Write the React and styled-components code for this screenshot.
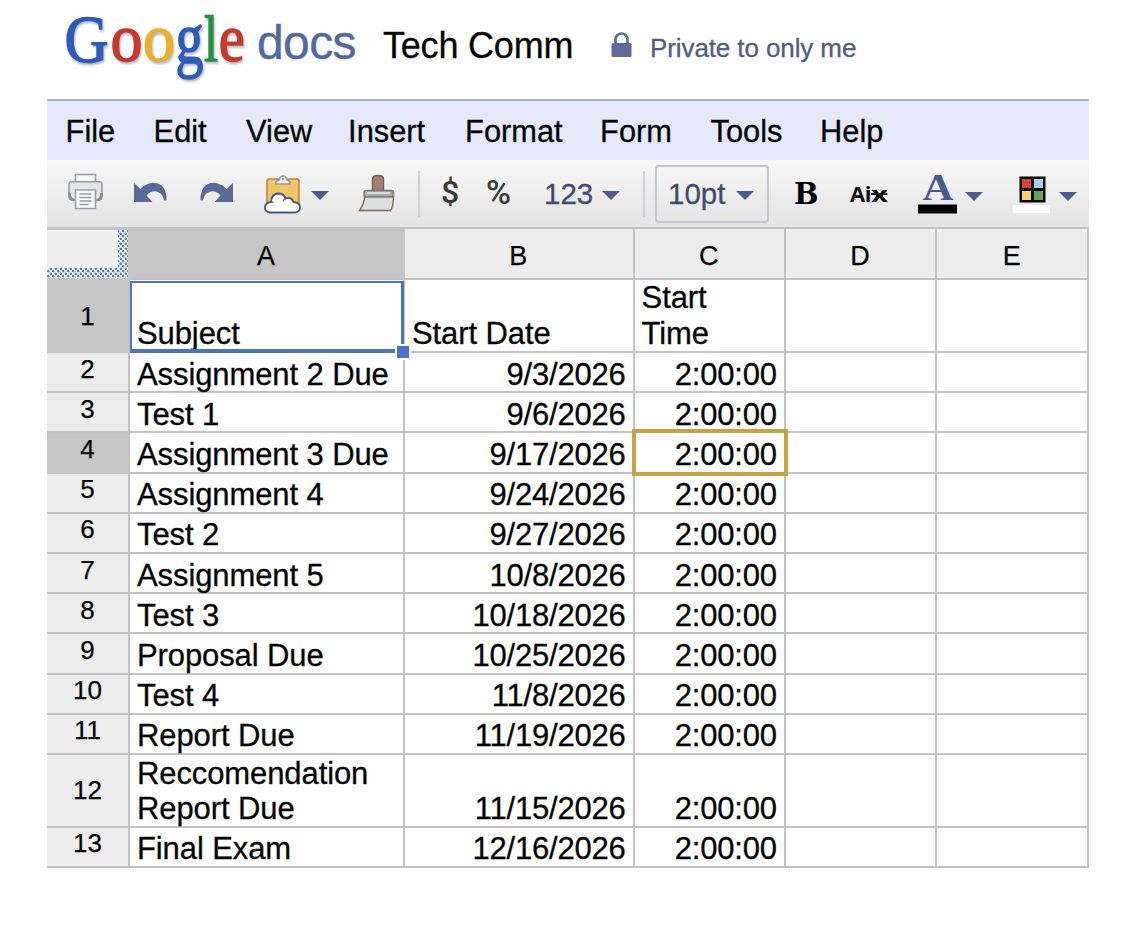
import { Fragment } from 'react';
import styled, { createGlobalStyle, css } from 'styled-components';

const GlobalStyle = createGlobalStyle`
  *, *::before, *::after {
    box-sizing: border-box;
  }
  body {
    margin: 0;
    background-color: #fefefe;
    font-family: "Liberation Sans", Arial, sans-serif;
    color: #050505;
  }
`

const Page = styled.div`
  width: 1134px;
  height: 928px;
  padding: 0 45px 0 47px;
  overflow: hidden;
`

const Header = styled.header`
  height: 99px;
  display: flex;
  align-items: flex-start;
`

const Logo = styled.svg`
  width: 210px;
  height: 96px;
  flex: none;
  overflow: visible;
`

const Product = styled.div`
  width: 126px;
  padding-top: 16px;
  font-size: 48px;
  line-height: 53px;
  letter-spacing: -0.6px;
  color: #5468a0;
  -webkit-text-stroke: 0.4px #5468a0;
`

const DocTitle = styled.h1`
  width: 228px;
  margin: 0;
  padding-top: 25px;
  font-size: 36px;
  line-height: 42px;
  font-weight: normal;
  letter-spacing: -0.2px;
  -webkit-text-stroke: 0.3px #050505;
`

const Lock = styled.svg`
  width: 22px;
  height: 27px;
  margin-top: 32px;
`

const Privacy = styled.div`
  margin-left: 17px;
  padding-top: 33px;
  font-size: 26px;
  line-height: 30px;
  letter-spacing: -0.1px;
  color: #505d80;
  -webkit-text-stroke: 0.3px #505d80;
`

const MenuBar = styled.nav`
  height: 61px;
  padding: 2px 0 0 18.6px;
  border-top: 2px solid #a6b0d6;
  background-color: #e6e8fb;
  display: flex;
  align-items: center;
`

const MenuItem = styled.div`
  width: ${({ $width }) => $width}px;
  font-size: 30.8px;
  line-height: 36px;
  white-space: nowrap;
  -webkit-text-stroke: 0.3px #050505;
`

const Toolbar = styled.div`
  height: 69px;
  padding-left: 20px;
  border-bottom: 2px solid #c2c2c2;
  background: linear-gradient(#f7f7f7, #e4e4e4);
  display: flex;
  align-items: center;
`

const Tool = styled.div`
  width: ${({ $width }) => $width}px;
  height: 67px;
  padding-bottom: ${({ $lift }) => $lift || 0}px;
  flex: none;
  display: flex;
  align-items: center;

  svg {
    display: block;
    flex: none;
    overflow: visible;
  }
`

const Separator = styled.div`
  width: 2px;
  height: 46px;
  margin-right: ${({ $gap }) => $gap}px;
  flex: none;
  background-color: #d0d1d4;
`

const ToolText = styled.span`
  font-size: 29.5px;
  line-height: 34px;
  color: #414b6b;
  -webkit-text-stroke: 0.3px #414b6b;
`

const FormatSign = styled.span`
  font-family: Roboto, sans-serif;
  font-size: ${({ $size }) => $size}px;
  font-weight: 500;
  line-height: 36px;
  color: #3a3a3a;
`

const Caret = styled.span`
  width: 0;
  height: 0;
  margin-left: ${({ $gap }) => $gap}px;
  margin-top: ${({ $drop }) => $drop || 0}px;
  border-left: 9px solid transparent;
  border-right: 9px solid transparent;
  border-top: 9px solid #4a5b8e;
`

const SizeBox = styled.div`
  width: 114px;
  height: 58px;
  margin-right: 25px;
  padding-left: 11px;
  flex: none;
  display: flex;
  align-items: center;
  border: 2px solid #c3c4ce;
  border-radius: 4px;
`

const Bold = styled.span`
  padding-top: 1px;
  font-family: "DejaVu Serif", serif;
  font-weight: bold;
  font-size: 29px;
  line-height: 34px;
  color: #000;
`

const Clear = styled.span`
  font-family: "Open Sans", sans-serif;
  font-weight: 700;
  font-size: 22px;
  line-height: 30px;
  letter-spacing: -0.5px;
  color: #111;

  s {
    display: inline-block;
    transform: scaleX(1.35);
    transform-origin: left;
    text-decoration-thickness: 2px;
  }
`

const Grid = styled.div`
  width: 1042px;
  display: grid;
  grid-template-columns: 83px 275px 229.6px 151.2px 151.6px 151.6px;
  grid-template-rows: 51px 73px repeat(10, 40.2px) 73px 40px;
`

const line = '2px solid #c3c3c3'

const ColumnHead = styled.div`
  border-right: 2px solid ${({ $active }) => ($active ? '#c6c6c6' : '#c3c3c3')};
  border-bottom: ${line};
  background-color: ${({ $active }) => ($active ? '#c6c6c6' : '#ededed')};
  display: flex;
  justify-content: center;
  align-items: center;
  padding: 6px 1px 0 0;
  font-size: 27px;
  -webkit-text-stroke: 0.25px #050505;
`

const Corner = styled.div`
  background-color: #c6c6c6;
  padding: 1px 2px 2px 0;
`

const CornerDots = styled.div`
  width: 81px;
  height: 48px;
  padding: 0 10px 10px 0;
  background-color: #eef3fd;
  background-image: radial-gradient(circle at 1.25px 1.25px, #4a74cf 0.9px, transparent 1.5px),
    radial-gradient(circle at 3.75px 3.75px, #4a74cf 0.9px, transparent 1.5px);
  background-size: 5px 5px;
`

const CornerFace = styled.div`
  width: 71px;
  height: 38px;
  background-color: #efefef;
`

const RowHead = styled.div`
  border-right: ${line};
  border-bottom: 2px solid ${({ $active }) => ($active ? '#c6c6c6' : '#c3c3c3')};
  background-color: ${({ $active }) => ($active ? '#c6c6c6' : '#ededed')};
  display: flex;
  justify-content: center;
  align-items: center;
  padding-bottom: ${({ $tall }) => ($tall ? 0 : 7)}px;
  font-size: 26px;
  line-height: 30px;
  -webkit-text-stroke: 0.25px #050505;
`

const selected = css`
  &::before {
    content: "";
    position: absolute;
    inset: 1px -1px -2px 0;
    border: solid #4f74bf;
    border-width: 2px 3px 4px 2px;
  }
  &::after {
    content: "";
    position: absolute;
    right: -8px;
    bottom: -9px;
    width: 16px;
    height: 16px;
    border: 2px solid #fefefe;
    background-color: #4a72cc;
  }
`

const collaborator = css`
  &::before {
    content: "";
    position: absolute;
    inset: -4px -4px -4px -3px;
    border: 4px solid #c8a247;
  }
`

const Cell = styled.div`
  position: relative;
  z-index: ${({ $mark }) => ($mark ? 1 : 0)};
  min-width: 0;
  padding: 0 7px;
  border-right: ${line};
  border-bottom: ${line};
  display: flex;
  align-items: flex-end;
  justify-content: ${({ $right }) => ($right ? 'flex-end' : 'flex-start')};
  font-size: 31px;
  line-height: 35.5px;
  letter-spacing: ${({ $right }) => ($right ? -0.2 : -0.1)}px;
  white-space: pre;
  -webkit-text-stroke: 0.3px #050505;
  ${({ $mark }) => $mark === 'selected' && selected}
  ${({ $mark }) => $mark === 'collaborator' && collaborator}
`

const CellText = styled.span`
  margin-bottom: ${({ $head }) => ($head ? 0 : -1)}px;
`

const menus = [
  ['File', 88],
  ['Edit', 92.5],
  ['View', 102],
  ['Insert', 117],
  ['Format', 135],
  ['Form', 110.5],
  ['Tools', 109.5],
  ['Help', 80],
]

const letters = [
  ['G', 17.5, 62, 68, 44, '#2f5bb7'],
  ['o', 63.5, 60.5, 68, 32, '#c53a2b'],
  ['o', 96, 60.5, 68, 32, '#e9b02f'],
  ['g', 128.5, 62.5, 73, 28, '#2f5bb7'],
  ['l', 157, 60.5, 66, 14, '#2c8f3c'],
  ['e', 171.8, 60.5, 68, 26, '#c53a2b'],
]

const rows = [
  ['Subject', 'Start Date', 'Start\nTime'],
  ['Assignment 2 Due', '9/3/2026', '2:00:00'],
  ['Test 1', '9/6/2026', '2:00:00'],
  ['Assignment 3 Due', '9/17/2026', '2:00:00'],
  ['Assignment 4', '9/24/2026', '2:00:00'],
  ['Test 2', '9/27/2026', '2:00:00'],
  ['Assignment 5', '10/8/2026', '2:00:00'],
  ['Test 3', '10/18/2026', '2:00:00'],
  ['Proposal Due', '10/25/2026', '2:00:00'],
  ['Test 4', '11/8/2026', '2:00:00'],
  ['Report Due', '11/19/2026', '2:00:00'],
  ['Reccomendation\nReport Due', '11/15/2026', '2:00:00'],
  ['Final Exam', '12/16/2026', '2:00:00'],
]

const GoogleLogo = () => (
  <Logo viewBox="0 0 210 96">
    <defs>
      <filter id="bevel" x="-10%" y="-10%" width="125%" height="130%">
        <feDropShadow dx="1" dy="2" stdDeviation="1.2" floodColor="#5d6f9c" floodOpacity="0.5" />
      </filter>
    </defs>
    <g fontFamily="Liberation Serif, serif" strokeWidth="1.5" filter="url(#bevel)">
      {letters.map(([letter, x, y, size, width, color], i) => (
        <text key={i} x={x} y={y} fontSize={size} textLength={width} lengthAdjust="spacingAndGlyphs" fill={color} stroke={color}>
          {letter}
        </text>
      ))}
    </g>
  </Logo>
)

const PrintIcon = () => (
  <svg width="37" height="37" viewBox="0 0 37 37" fill="none" stroke="#9a9da3" strokeWidth="1.6">
    <path d="M8.5 9V1.5h20V9" fill="#f8f8f8" />
    <path d="M4 8.8h29q2 0 2 3v11q0 4.500-4 4.500H6q-4 0-4-4.500v-11q0-3 2-3Z" fill="#e3e5e9" />
    <path d="M2.500 20q0 7 5 7M34.500 20q0 7-5 7" stroke="#858991" strokeWidth="2.500" />
    <path d="M8.500 17h20v18.500h-20Z" fill="#fbfbfb" />
    <path d="M12.500 21h12M12.500 24.500h12M12.500 28h12M12.500 31.500h9" strokeWidth="1.300" />
  </svg>
)

const UndoIcon = ({ flip }) => (
  <svg width="34" height="21" viewBox="0 0 34 21">
    <path
      transform={flip ? 'translate(34 0) scale(-1 1)' : undefined}
      d="M1 1v19h18.500l-6-6.500Q18 8.500 23.500 9.500 30 11 31 18.500h2.500Q34 8 28 3 20-2 11.500 3.600L7.300 7Z"
      fill="#586a98"
    />
  </svg>
)

const PasteIcon = () => (
  <svg width="40" height="40" viewBox="0 0 40 40">
    <rect x="4" y="5" width="32" height="31" rx="2" fill="#f1c468" stroke="#b98338" strokeWidth="1.500" />
    <path d="M12.500 10q0-3.500 4-4 0-4 3.500-4t3.500 4q4 .5 4 4Z" fill="#f4f4f4" stroke="#999" strokeWidth="1.300" />
    <circle cx="20" cy="5" r="1.400" fill="#999" />
    <path
      d="M7 38.500q-5-.5-5-5t6-5.500Q8.500 20 15 19.500q6 0 7.500 5 6-2 8 3.500 6 .5 6.500 5 0 5-5 5.500Z"
      fill="#fff"
      stroke="#45598c"
      strokeWidth="1.800"
    />
    <path d="M8 28q1.500-.3 2.500.5M22.500 24.500q-2 1-2.500 3" fill="none" stroke="#45598c" strokeWidth="1.300" />
  </svg>
)

const BrushIcon = () => (
  <svg width="38" height="38" viewBox="0 0 38 38" strokeWidth="1.400">
    <path d="M14.500 17V5q0-3.500 5.500-3.500T25.500 5v12Z" fill="#a08172" stroke="#765b4e" />
    <path d="M7 22q-1 8-5.500 14.500h31q3-4 3-14.500Z" fill="#dedede" stroke="#7f6558" />
    <rect x="6" y="16.500" width="29.500" height="6.500" rx="2" fill="#a9adad" stroke="#777" />
    <path d="M9 19h23" stroke="#dadddd" strokeWidth="2" />
  </svg>
)

const TextColorIcon = () => (
  <svg width="39" height="44" viewBox="0 0 39 44">
    <text x="4.500" y="27.500" fontFamily="Liberation Serif, serif" fontWeight="bold" fontSize="37" textLength="31" lengthAdjust="spacingAndGlyphs" fill="#475a8c">
      A
    </text>
    <rect x="0" y="32.500" width="39" height="9" fill="#000" />
  </svg>
)

const FillColorIcon = () => (
  <svg width="37" height="44" viewBox="0 0 37 44">
    <rect x="6.500" y="4.500" width="26" height="26" fill="#080808" />
    <rect x="9" y="7" width="9" height="9" fill="#d8433a" />
    <rect x="21" y="7" width="9" height="9" fill="#a9cde9" />
    <rect x="9" y="19" width="9" height="9" fill="#f8d267" />
    <rect x="21" y="19" width="9" height="9" fill="#63a552" />
    <rect x="0" y="33" width="37" height="8" fill="#fff" />
  </svg>
)

const getMark = (row, column) => {
  if (row === 0 && column === 0) return 'selected'
  if (row === 3 && column === 2) return 'collaborator'
  return undefined
}

export default function App() {
  return (
    <>
      <GlobalStyle />
      <Page>
        <Header>
          <GoogleLogo />
          <Product>docs</Product>
          <DocTitle>Tech Comm</DocTitle>
          <Lock viewBox="0 0 22 27">
            <path d="M4.500 12V7.500a6 6 0 0 1 12 0V12" fill="none" stroke="#606b91" strokeWidth="2.600" />
            <rect x="0.500" y="11" width="20" height="14" rx="1.500" fill="#606b97" />
          </Lock>
          <Privacy>Private to only me</Privacy>
        </Header>
        <MenuBar>
          {menus.map(([name, width]) => (
            <MenuItem key={name} $width={width}>{name}</MenuItem>
          ))}
        </MenuBar>
        <Toolbar>
          <Tool $width={66} $lift={4}><PrintIcon /></Tool>
          <Tool $width={67} $lift={2}><UndoIcon /></Tool>
          <Tool $width={63} $lift={2}><UndoIcon flip /></Tool>
          <Tool $width={95}>
            <PasteIcon />
            <Caret $gap={8} $drop={3} />
          </Tool>
          <Tool $width={60} $lift={1}><BrushIcon /></Tool>
          <Separator $gap={21} />
          <Tool $width={45} $lift={3}><FormatSign $size={32}>$</FormatSign></Tool>
          <Tool $width={58} $lift={3}><FormatSign $size={34}>%</FormatSign></Tool>
          <Tool $width={99}>
            <ToolText>123</ToolText>
            <Caret $gap={9} $drop={3} />
          </Tool>
          <Separator $gap={10} />
          <SizeBox>
            <ToolText>10pt</ToolText>
            <Caret $gap={11} $drop={3} />
          </SizeBox>
          <Tool $width={56}><Bold>B</Bold></Tool>
          <Tool $width={68} $lift={2}><Clear>Ai<s>x</s></Clear></Tool>
          <Tool $width={95}>
            <TextColorIcon />
            <Caret $gap={8} $drop={6} />
          </Tool>
          <Tool $width={70}>
            <FillColorIcon />
            <Caret $gap={9} $drop={6} />
          </Tool>
        </Toolbar>
        <Grid>
          <Corner>
            <CornerDots><CornerFace /></CornerDots>
          </Corner>
          {['A', 'B', 'C', 'D', 'E'].map((name) => (
            <ColumnHead key={name} $active={name === 'A'}>{name}</ColumnHead>
          ))}
          {rows.map((row, i) => (
            <Fragment key={i}>
              <RowHead $active={i === 0 || i === 3} $tall={i === 0 || i === 11}>{i + 1}</RowHead>
              {[0, 1, 2, 3, 4].map((column) => (
                <Cell
                  key={column}
                  $right={i > 0 && column > 0}
                  $mark={getMark(i, column)}
                >
                  <CellText $head={i === 0}>{row[column]}</CellText>
                </Cell>
              ))}
            </Fragment>
          ))}
        </Grid>
      </Page>
    </>
  )
}
